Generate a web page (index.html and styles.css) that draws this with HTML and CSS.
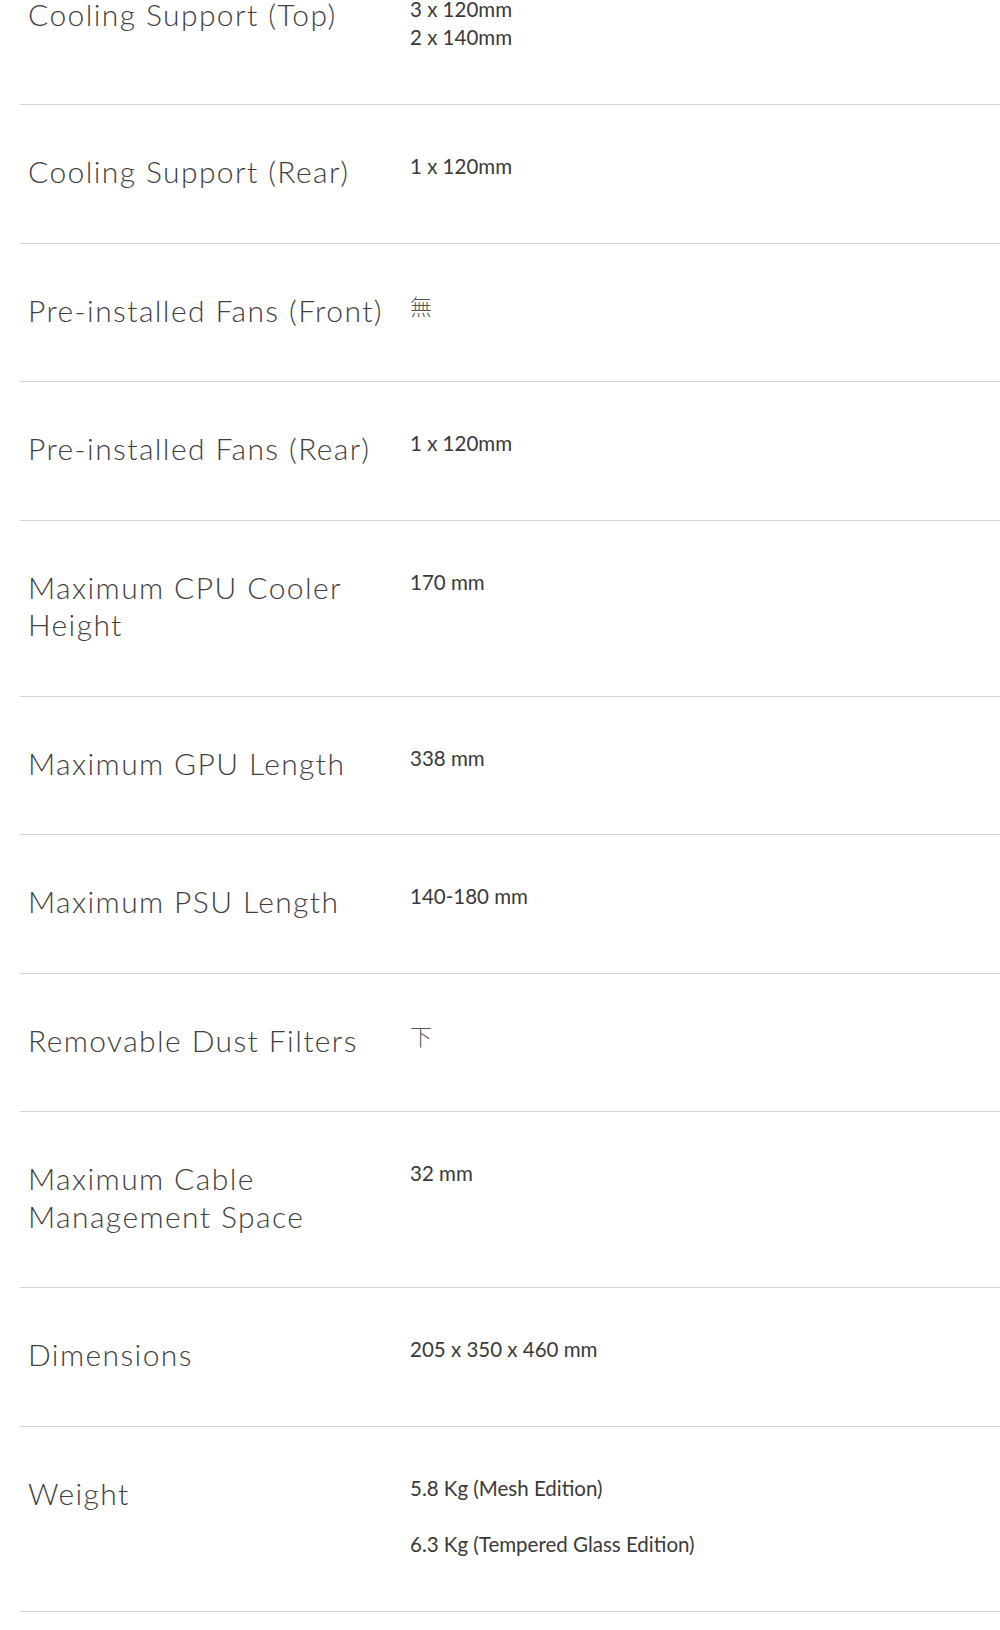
FILE: index.html
```html
<!DOCTYPE html>
<html lang="en">
<head>
<meta charset="utf-8">
<title>Specifications</title>
<link rel="stylesheet" href="styles.css">
</head>
<body>
<div class="specs">
  <div class="row">
    <div class="label">Cooling Support (Top)</div>
    <div class="value"><p>3 x 120mm<br>2 x 140mm</p></div>
  </div>
  <div class="row">
    <div class="label">Cooling Support (Rear)</div>
    <div class="value"><p>1 x 120mm</p></div>
  </div>
  <div class="row">
    <div class="label">Pre-installed Fans (Front)</div>
    <div class="value"><p class="cjk">無</p></div>
  </div>
  <div class="row">
    <div class="label">Pre-installed Fans (Rear)</div>
    <div class="value"><p>1 x 120mm</p></div>
  </div>
  <div class="row">
    <div class="label">Maximum CPU Cooler Height</div>
    <div class="value"><p>170 mm</p></div>
  </div>
  <div class="row">
    <div class="label">Maximum GPU Length</div>
    <div class="value"><p>338 mm</p></div>
  </div>
  <div class="row">
    <div class="label">Maximum PSU Length</div>
    <div class="value"><p>140-180 mm</p></div>
  </div>
  <div class="row">
    <div class="label">Removable Dust Filters</div>
    <div class="value"><p class="cjk">下</p></div>
  </div>
  <div class="row">
    <div class="label">Maximum Cable Management Space</div>
    <div class="value"><p>32 mm</p></div>
  </div>
  <div class="row">
    <div class="label">Dimensions</div>
    <div class="value"><p>205 x 350 x 460 mm</p></div>
  </div>
  <div class="row">
    <div class="label">Weight</div>
    <div class="value"><p>5.8 Kg (Mesh Edition)</p><p>6.3 Kg (Tempered Glass Edition)</p></div>
  </div>
</div>
</body>
</html>
```

FILE: styles.css
```css
html, body {
  margin: 0;
  padding: 0;
  background: #ffffff;
}

body {
  font-family: "Lato", "Noto Sans", sans-serif;
}

.specs {
  margin: -52px 0 0 20px;
}

.row {
  display: flex;
  align-items: flex-start;
  padding: 48px 0 52px 8px;
  border-bottom: 1px solid #d2d2d2;
}

.label {
  width: 382px;
  flex: none;
  font-size: 30px;
  font-weight: 300;
  line-height: 37.5px;
  letter-spacing: 1.4px;
  color: #3f3f3f;
}

.value {
  flex: 1;
  font-size: 20.5px;
  line-height: 28px;
  color: #3a3a3a;
  margin-top: -1px;
  margin-bottom: 1px;
}

.value p {
  margin: 0;
}

.value p + p {
  margin-top: 28px;
}

.value .cjk {
  font-family: "Noto Sans CJK TC", "Noto Sans CJK SC", sans-serif;
  font-weight: 300;
  font-size: 22px;
  color: #555555;
}
```
